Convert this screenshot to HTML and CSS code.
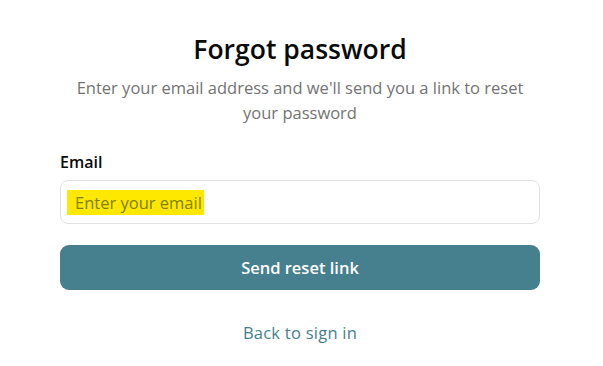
FILE: index.html
```html
<!DOCTYPE html>
<html>
    <head>
        <title>Forgot password</title>
        <meta name="viewport" content="width=device-width, initial-scale=1.0">
        <link rel="stylesheet" href="styles.css">
    </head>
    <body>
        <div class="forgot-card">
            <h1 class="forgot-title">Forgot password</h1>
            <p class="forgot-subtitle">Enter your email address and we'll send you a link to reset your password</p>
            <form class="forgot-form">
                <label class="field-label" for="email">Email</label>
                <div class="field-input" id="email">
                    <span class="field-placeholder">Enter your email</span>
                </div>
                <button type="button" class="submit-button">Send reset link</button>
            </form>
            <a class="back-link" href="#">Back to sign in</a>
        </div>
    </body>
</html>
```

FILE: styles.css
```css
body {
    margin: 0;
    background: #ffffff;
    font-family: "Open Sans", "Noto Sans", sans-serif;
    color: #111111;
}
.forgot-card {
    width: 480px;
    margin: 0 0 0 60px;
    padding-top: 30px;
    display: flex;
    flex-direction: column;
    align-items: stretch;
}
.forgot-title {
    margin: 0;
    text-align: center;
    font-size: 26.5px;
    font-weight: 600;
    line-height: 38px;
    color: #0a0a0a;
}
.forgot-subtitle {
    margin: 6.5px 0 0;
    text-align: center;
    font-size: 16.5px;
    line-height: 25px;
    color: #737373;
}
.forgot-form {
    display: flex;
    flex-direction: column;
    margin-top: 26.5px;
}
.field-label {
    font-size: 16px;
    font-weight: 600;
    line-height: 22px;
    color: #0a0a0a;
}
.field-input {
    margin-top: 7px;
    height: 44px;
    box-sizing: border-box;
    border: 1px solid #e2e2e2;
    border-radius: 8px;
    padding: 0 6px;
    display: flex;
    align-items: center;
}
.field-placeholder {
    background: #ffe800;
    color: #7e7e00;
    font-size: 16.5px;
    line-height: 25px;
    padding: 0 2px 0 8px;
}
.submit-button {
    margin-top: 21px;
    height: 45px;
    border: none;
    border-radius: 9px;
    background: #467f8e;
    color: #ffffff;
    font-family: inherit;
    font-size: 16.5px;
    font-weight: 600;
}
.back-link {
    margin-top: 31px;
    text-align: center;
    font-size: 16.5px;
    letter-spacing: 0.25px;
    line-height: 24px;
    color: #467f8e;
    text-decoration: none;
}
```
